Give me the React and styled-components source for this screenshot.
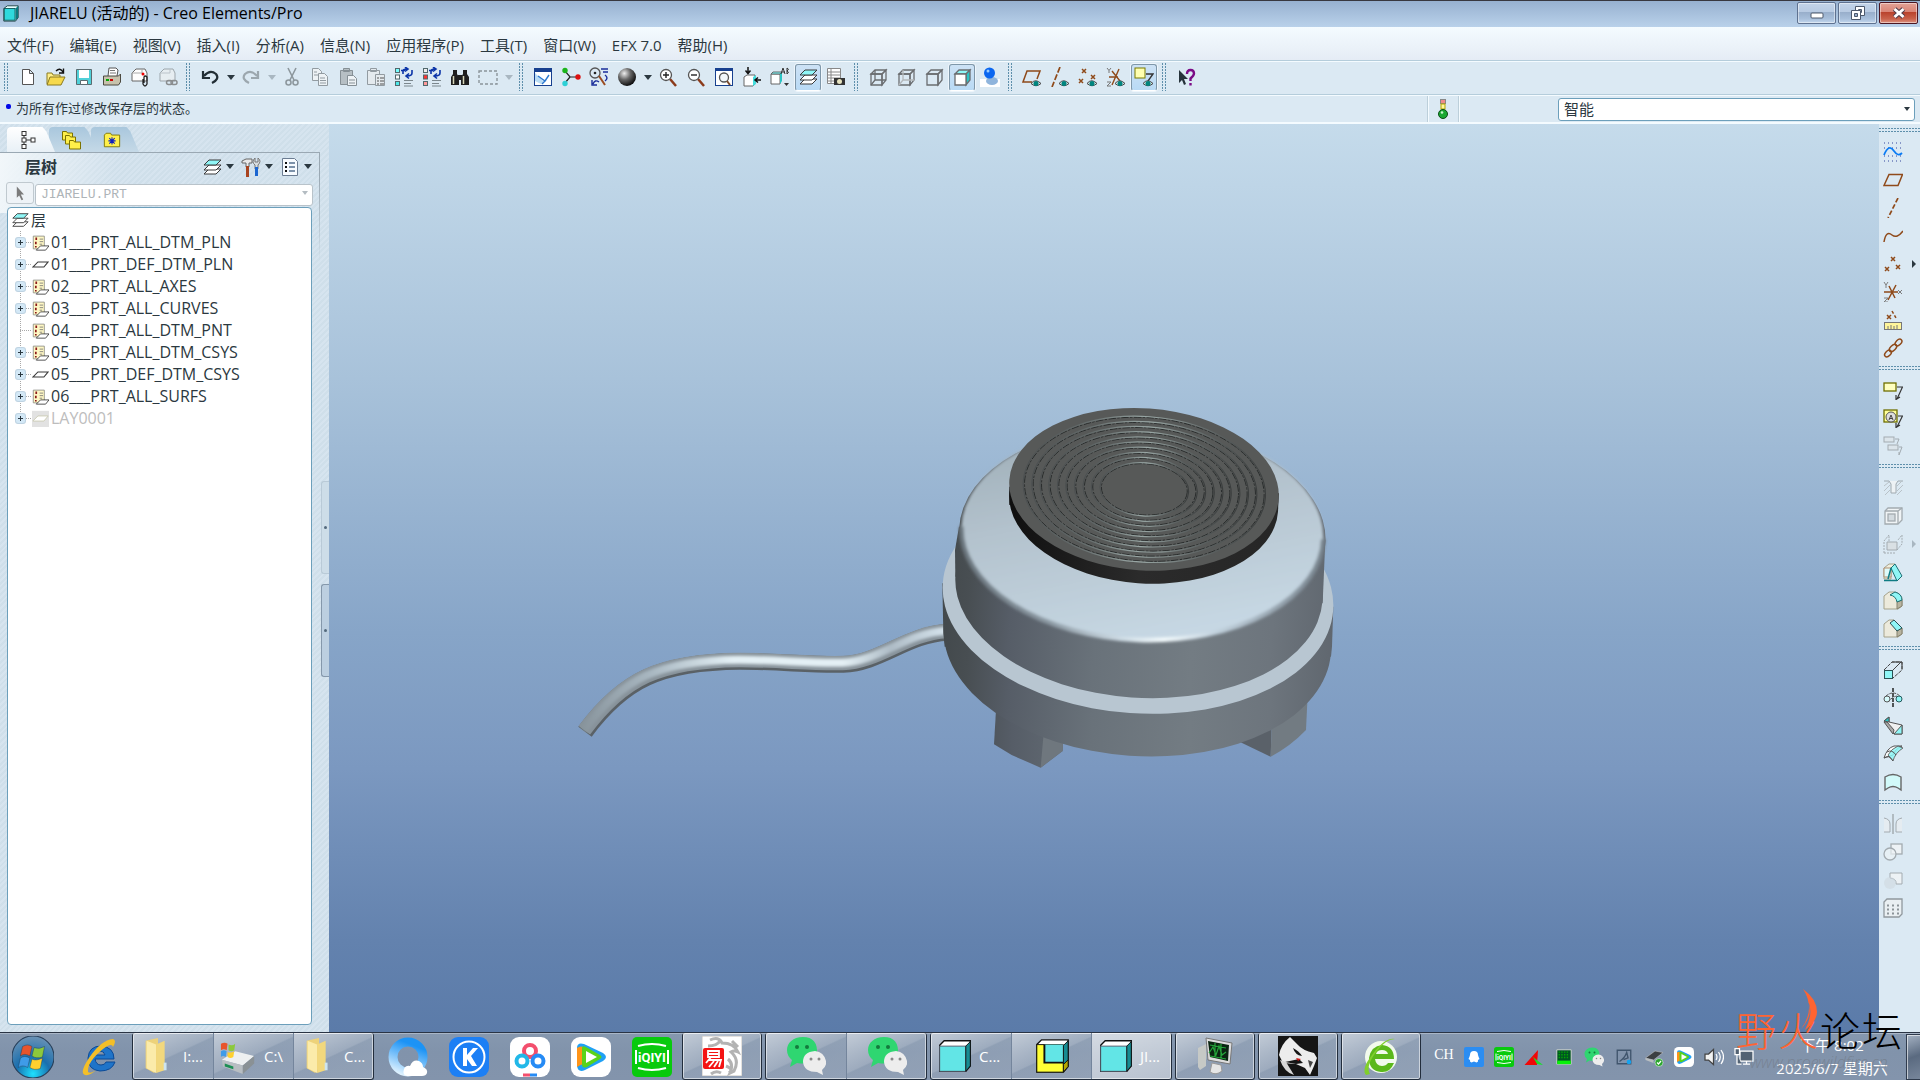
import React from "react";
import styled, { createGlobalStyle, css } from "styled-components";

const Global = createGlobalStyle`
  *, *::before, *::after { box-sizing: border-box; }
  body { margin: 0; background: #dbe9f3; }
  button, input, select { font: inherit; color: inherit; }
  button { background: none; border: 0; padding: 0; margin: 0; }
  ul { list-style: none; margin: 0; padding: 0; }
  svg { display: block; }
`;

const Desktop = styled.div`
  display: flex;
  flex-direction: column;
  height: 100vh;
  overflow: hidden;
  position: relative;
  color: #2b3840;
  font-family: "Open Sans", "Noto Sans CJK SC", sans-serif;
  font-size: 15px;
`;

/* ---------- title bar ---------- */
const TitleBar = styled.header`
  height: 27px;
  flex: none;
  display: flex;
  align-items: center;
  gap: 10px;
  padding: 0 2px 2px;
  border-top: 1px solid #38383f;
  background: linear-gradient(#97b1d0, #b9d1ea);
  color: #000;
`;
const Title = styled.h1`
  flex: 1;
  margin: 0;
  font-size: 16px;
  line-height: 22px;
  font-weight: 400;
`;
const WindowButtons = styled.div`
  display: flex;
  gap: 2px;
  height: 22px;
`;
const WindowButton = styled.button`
  width: 39px;
  height: 22px;
  display: grid;
  place-items: center;
  border-radius: 2px;
  border: 1px solid ${(p) => (p.$close ? "#4c1622" : "#5f7290")};
  box-shadow: inset 0 0 0 1px rgba(255, 255, 255, 0.45);
  background: ${(p) =>
    p.$close
      ? "linear-gradient(#e3a296, #d98475 45%, #b9422c 46%, #c9634c 80%, #dd9484)"
      : "linear-gradient(#c3d4e9, #b7cae2 45%, #98aecb 46%, #a9c0dc 80%, #c4d8ee)"};
`;

/* ---------- menus and toolbars ---------- */
const MenuBar = styled.nav`
  height: 34px;
  flex: none;
  display: flex;
  gap: 2px;
  background: linear-gradient(#f4fbff, #e5ecf5);
  border-bottom: 1px solid #b5cddb;
`;
const MenuItem = styled.button`
  padding: 2px 7px 0;
  line-height: 32px;
  font-size: 15px;
  white-space: nowrap;
`;
const ToolBar = styled.div`
  height: 34px;
  flex: none;
  display: flex;
  align-items: center;
  padding-bottom: 2px;
  border-top: 1px solid #f4fbff;
  border-bottom: 1px solid #b5cddb;
  background: #dbe9f3;
`;
const Grip = styled.span`
  flex: none;
  ${(p) =>
    p.$flat
      ? css`
          height: 4px;
          margin: 4px 0 6px;
          background: repeating-linear-gradient(90deg, #5e8fab 0 2px, transparent 2px 3px);
          mask: linear-gradient(#000 1px, transparent 1px 3px, #000 3px);
        `
      : css`
          width: 4px;
          height: 28px;
          margin: 0 6px 0 4px;
          background: repeating-linear-gradient(#5e8fab 0 2px, transparent 2px 3px);
          mask: linear-gradient(90deg, #000 1px, transparent 1px 3px, #000 3px);
        `}
`;
const ToolButton = styled.button`
  width: 28px;
  height: 28px;
  flex: none;
  display: grid;
  place-items: center;
  border-radius: 3px;
  ${(p) =>
    p.$pressed &&
    css`
      width: 26px;
      height: 27px;
      margin: 0 1px;
      background: linear-gradient(#cde2f5, #b9daf5);
      border: 1px solid #7f97a9;
      border-bottom-color: #fff;
      box-shadow: 0 0 0 1px #eef6fc;
    `}
`;
const DropButton = styled.button`
  width: 13px;
  height: 26px;
  flex: none;
  display: grid;
  place-items: center;
  color: ${(p) => (p.$off ? "#a9b7c1" : "#2b3840")};
`;

/* ---------- status row ---------- */
const StatusRow = styled.div`
  height: 29px;
  flex: none;
  display: flex;
  align-items: center;
  background: #dbe9f3;
  border-top: 1px solid #f4fbff;
  border-bottom: 2px solid #f4fbff;
`;
const StatusText = styled.p`
  flex: 1;
  margin: 0;
  padding: 0 0 2px 6px;
  display: flex;
  align-items: center;
  gap: 5px;
  font-size: 13px;
  line-height: 24px;
`;
const Bullet = styled.i`
  width: 5px;
  height: 5px;
  margin-bottom: 3px;
  border-radius: 2px;
  background: #0008e8;
`;
const LightCell = styled.div`
  width: 32px;
  height: 26px;
  display: grid;
  place-items: center;
  border: solid #bccfda;
  border-width: 0 1px;
  box-shadow: 1px 0 #f4fbff, inset 1px 0 #f4fbff;
`;
const FilterCell = styled.div`
  width: 461px;
  padding-right: 5px;
  display: flex;
  justify-content: flex-end;
`;
const FilterField = styled.div`
  width: 357px;
  position: relative;
`;
const SelectBox = styled.select`
  width: 100%;
  height: ${(p) => (p.$muted ? "22px" : "23px")};
  padding: 0 5px;
  appearance: none;
  border: 1px solid ${(p) => (p.$muted ? "#b9c3ca" : "#6c9fbb")};
  border-radius: 3px;
  background: #fff;
  opacity: 1;
  color: ${(p) => (p.$muted ? "#aeb4b8" : "#2b3840")};
  font-family: ${(p) =>
    p.$muted ? '"Liberation Mono", monospace' : '"Open Sans", "Noto Sans CJK SC", sans-serif'};
  font-size: ${(p) => (p.$muted ? "13px" : "15px")};
`;
const SelectArrow = styled.span`
  position: absolute;
  right: 5px;
  top: 50%;
  transform: translateY(-50%);
  pointer-events: none;
  color: ${(p) => (p.$off ? "#b4bcc2" : "#2b3840")};
`;

/* ---------- work area ---------- */
const WorkArea = styled.main`
  flex: 1;
  min-height: 0;
  display: flex;
`;
const SidePanel = styled.aside`
  width: 329px;
  flex: none;
  display: flex;
  background: repeating-linear-gradient(135deg, #cfdfea 0 2px, #d6e4ef 2px 4px);
`;
const PanelColumn = styled.div`
  width: 320px;
  display: flex;
  flex-direction: column;
`;
const TabStrip = styled.div`
  display: flex;
  height: 28px;
  padding: 3px 0 0 7px;
`;
const Tab = styled.button`
  width: 42px;
  height: 25px;
  display: flex;
  padding-left: 12px;
  align-items: center;
  position: relative;
  z-index: ${(p) => (p.$active ? 2 : 1)};
  &::before {
    content: "";
    position: absolute;
    inset: 0 -6px 0 0;
    z-index: -1;
    border-radius: 4px 0 0 0;
    background: ${(p) => (p.$active ? "linear-gradient(#fff, #e8f0f6)" : "linear-gradient(#a9c7dd, #c5d9e7)")};
    clip-path: polygon(0 0, 74% 0, 82% 18%, 100% 100%, 0 100%);
  }
`;
const PanelBody = styled.section`
  flex: 1;
  min-height: 0;
  display: flex;
  flex-direction: column;
  border-top: 1px solid #98a9b4;
  border-right: 1px solid #b5c3ce;
  border-image: linear-gradient(#9aa8b3, #9aa8b3 24px, transparent 110px) 1;
  background: linear-gradient(100deg, #f2f7fa, rgba(242, 247, 250, 0) 36%) 0 0 / 100% 60px no-repeat;
  padding: 0 6px 7px;
`;
const PanelHeader = styled.div`
  height: 29px;
  display: flex;
  align-items: center;
  padding: 0 1px 2px 19px;
`;
const PanelTitle = styled.h2`
  flex: 1;
  margin: 0;
  font-size: 16px;
  font-weight: 700;
  line-height: 24px;
`;
const PanelTool = styled.button`
  width: 39px;
  height: 24px;
  display: flex;
  align-items: center;
  justify-content: flex-end;
  gap: 4px;
`;
const PartRow = styled.div`
  display: flex;
  gap: 1px;
  height: 25px;
`;
const PickButton = styled.button`
  width: 28px;
  height: 22px;
  display: grid;
  place-items: center;
  border: 1px solid #c0c9cf;
  border-radius: 3px;
  background: #eef3f7;
`;
const PartField = styled.div`
  flex: 1;
  height: 22px;
  position: relative;
`;
const TreeBox = styled.div`
  flex: 1;
  width: 305px;
  margin-left: 1px;
  border: 1px solid #6c9fbb;
  border-radius: 4px;
  background: #fff;
  padding: 0 3px;
`;
const TreeRoot = styled.div`
  height: 23px;
  display: flex;
  align-items: center;
  gap: 2px;
`;
const TreeRow = styled.li`
  height: 22px;
  display: flex;
  align-items: center;
  padding-left: 1px;
  line-height: 20px;
  font-size: 16px;
  white-space: nowrap;
  color: ${(p) => (p.$off ? "#bdbdbd" : "#2b3840")};
`;
const Twig = styled.span`
  width: 20px;
  height: 22px;
  display: flex;
  align-items: center;
  padding-left: 4px;
  background:
    repeating-linear-gradient(#a9a9a9 0 1px, transparent 1px 2px) 8px 0 / 1px ${(p) => (p.$last ? "11px" : "22px")} no-repeat,
    repeating-linear-gradient(90deg, #a9a9a9 0 1px, transparent 1px 2px) 8px 11px / 12px 1px no-repeat;
`;
const Expander = styled.button`
  width: 9px;
  height: 9px;
  border-radius: 2px;
  box-shadow: 0 0 0 1px #bfd3e2;
  background:
    linear-gradient(#2b3840, #2b3840) center / 5px 1px no-repeat,
    linear-gradient(#2b3840, #2b3840) center / 1px 5px no-repeat,
    #d3e8f6;
`;
const RowIcon = styled.span`
  width: 19px;
  display: grid;
  place-items: start;
`;
const Splitter = styled.div`
  width: 9px;
  padding: 357px 0 0 1px;
  display: flex;
  flex-direction: column;
  gap: 10px;
`;
const SplitHandle = styled.button`
  width: 8px;
  height: 93px;
  display: grid;
  place-items: center;
  border: 1px solid ${(p) => (p.$strong ? "#8598ab" : "#b9cad7")};
  border-right: 0;
  border-radius: 3px 0 0 3px;
  background: ${(p) => (p.$strong ? "#bccfe0" : "#cddde8")};
  &::after {
    content: "";
    width: 3px;
    height: 3px;
    border-radius: 50%;
    background: #53697c;
  }
`;
const Canvas = styled.section`
  flex: 1;
  min-width: 0;
  background: linear-gradient(#c5dbeb, #a8c2da 28%, #87a5c8 56%, #7b98c0 71%, #6382ae 90%, #5b7ba9);
`;
const Scene = styled.svg`
  width: 100%;
  height: 100%;
`;
const SideTools = styled.aside`
  width: 41px;
  flex: none;
  display: flex;
  flex-direction: column;
  background: #dbe9f3;
`;
const SideToolRow = styled.div`
  display: flex;
  align-items: center;
  height: 28px;
`;

/* ---------- taskbar ---------- */
const TaskBar = styled.footer`
  height: 48px;
  flex: none;
  display: flex;
  color: #fff;
  border-top: 1px solid #2a3444;
  box-shadow: inset 0 1px #a9b6c7;
  background: linear-gradient(#8698af, #8193ab 40%, #8394ac);
`;
const LaunchButton = styled.button`
  width: ${(p) => (p.$wide ? "66px" : "61px")};
  display: grid;
  place-items: center;
`;
const TaskGroup = styled.div`
  display: flex;
  margin-right: 3px;
  border: 1px solid #222d3c;
  border-top: 0;
  border-radius: 3px;
  box-shadow: inset 0 0 0 1px rgba(255, 255, 255, 0.55);
`;
const TaskButton = styled.button`
  width: ${(p) => (p.$solo ? "78px" : "80px")};
  display: flex;
  align-items: center;
  gap: 6px;
  justify-content: ${(p) => (p.$label ? "flex-start" : "center")};
  padding-left: ${(p) => (p.$label ? "6px" : "0")};
  font-size: 15px;
  text-align: left;
  white-space: nowrap;
  background: ${(p) =>
    p.$active
      ? "linear-gradient(160deg, rgba(255,255,255,.65), rgba(255,255,255,.42))"
      : "linear-gradient(155deg, rgba(255,255,255,.5), rgba(255,255,255,.22) 48%, rgba(255,255,255,.1) 50%, rgba(255,255,255,.12))"};
  & + & {
    border-left: 1px solid #74859c;
  }
`;
const Tray = styled.div`
  flex: 1;
  display: flex;
  align-items: center;
  justify-content: flex-end;
`;
const InputLang = styled.button`
  width: 30px;
  padding-bottom: 3px;
  font-family: "Liberation Serif", serif;
  font-size: 14px;
`;
const TrayButton = styled.button`
  width: 30px;
  height: 46px;
  display: grid;
  place-items: center;
`;
const Clock = styled.time`
  width: 147px;
  padding-right: 1px;
  font-size: 15px;
  line-height: 23px;
  text-align: center;
`;
const ShowDesktop = styled.button`
  width: 14px;
  height: 46px;
  border: 1px solid #2f3b4d;
  border-right: 0;
  box-shadow: inset 1px 1px rgba(255, 255, 255, 0.6);
  background: linear-gradient(160deg, #a5b2c3, #5a6a80 50%, #77869b);
`;
const Watermark = styled.div`
  position: absolute;
  right: 18px;
  bottom: 7px;
  width: 166px;
  pointer-events: none;
  font-family: "Noto Sans CJK SC", sans-serif;
  font-weight: 300;
`;
const MarkLine = styled.div`
  display: flex;
  justify-content: space-between;
  font-size: 40px;
  line-height: 44px;
  color: #000;
`;
const Fire = styled.span`
  color: #ff6432;
`;
const Flame = styled.svg`
  position: absolute;
  left: 64px;
  top: -18px;
`;
const MarkUrl = styled.div`
  font-family: "Open Sans", sans-serif;
  font-style: italic;
  font-size: 16px;
  line-height: 22px;
  text-align: center;
  color: rgba(110, 115, 125, 0.55);
`;

/* ---------- drawings ---------- */
const K = "#3a3a3a";
const CY = "#8ff6f6";
const BR = "#8f4a1a";
const GY = "#a3abb1";
const X = ({ x, y, c = BR, r = 2 }) => (
  <path d={`M${x - r} ${y - r}l${2 * r} ${2 * r}M${x + r} ${y - r}l${-2 * r} ${2 * r}`} stroke={c} strokeWidth="1.5" />
);
const Eye = () => (
  <g>
    <path d="M9 16.500Q13.500 11 19 16.500Q14 21 9 16.500Z" fill="#d5e2e4" stroke="#444" />
    <circle cx="14" cy="16.500" r="2.500" fill="#00857f" />
  </g>
);
const Swap = () => (
  <path d="M9 7V4q0-2 4-2M11 0l3 2-3 2.500M18 3v3q0 3-5 3M15 6.500L12 9l3 2.500M7 3.500h4" fill="none" stroke="#0b34a8" strokeWidth="1.600" />
);
const Cubes = ({ a, b, c }) => (
  <g>
    {[a, b, c].map((f, i) => (
      <rect key={i} x="1.500" y={1.5 + i * 6.5} width="4" height="4" fill={f} stroke="#52686c" />
    ))}
    <path d="M10 13.500h9M10 16.500h7M10 19h9" stroke="#7b878d" />
    <Swap />
  </g>
);
const Box = ({ top = "none", front = "none", side = "none", hidden }) => (
  <g stroke="#6b6d70" fill="none" strokeWidth="1.300">
    <path d="M3 7l4-4h11l-4 4z" fill={top} />
    <path d="M14 7l4-4v10l-4 5z" fill={side} />
    <path d="M3 7h11v11H3z" fill={front} />
    {hidden && <path d="M7 3v10h11M7 13l-4 5" stroke={hidden} />}
  </g>
);
const Plane = ({ y, fill = "#fff", s = K }) => <path d={`M2 ${y + 5}l5-5h12l-5 5z`} fill={fill} stroke={s} />;
const Tag = ({ fill = "#ffffc0", s = "#6f6f00", a = "#333" }) => (
  <g fill="none">
    <rect x="1" y="3" width="12" height="8" fill={fill} stroke={s} strokeWidth="1.300" />
    <path d="M14 7h5.500L14 19M13 15v4.500l4-2.500" stroke={a} strokeWidth="1.200" />
  </g>
);

const icons = {
  app: <g><path d="M2 5l4-3h12v13l-3 4H2z" fill="#eaffff" stroke="#1a3b3c" /><rect x="2.500" y="5" width="12" height="13" fill="#2fd9dd" stroke="#0f5557" /><path d="M15 5l3-3v13l-3 3z" fill="#0c7a80" /></g>,
  fresh: <path d="M4.500 2.500h7l4 4v11h-11zM11.500 2.500v4h4" fill="#fff" stroke="#555" />,
  open: <g><path d="M1 6h5l1 2h7v9H1z" fill="#ffef8a" stroke="#8a7a20" /><path d="M4 10h15l-4 8H1z" fill="#f6d94c" stroke="#8a7a20" /><path d="M10 4q4-4 7 1M17.500 1.500V6H13" fill="none" stroke="#111" strokeWidth="1.400" /></g>,
  save: <g><path d="M2.500 2.500h15v15h-15z" fill="#4fd0d8" stroke="#5b6b70" /><rect x="5" y="3" width="10" height="8" fill="#fff" /><path d="M6.500 13.500h7v4h-7z" fill="#fff" stroke="#5b6b70" /></g>,
  print: <g><path d="M6 9l1-8h7l2 2-1 6" fill="#fff" stroke="#555" /><path d="M8 3.500h5M8 6h6" stroke="#777" /><path d="M1.500 9h15l2-2v8l-2 3h-15z" fill="#c7c2ac" stroke="#4c4a40" /><path d="M4 13h3" stroke="#0a0" strokeWidth="2" /><path d="M8 13h3" stroke="#c00" strokeWidth="2" /></g>,
  mail: <g><path d="M2 14V6l4-4h9l2 4v8z" fill="#fdfdfd" stroke="#666" /><path d="M2 6h10V2" fill="none" stroke="#aaa" /><circle cx="13" cy="7" r="1.500" fill="#e00" /><path d="M13 12v5q2 4 4 0v-7q-2-2-3 0v6" fill="none" stroke="#222" strokeWidth="1.300" /></g>,
  mailLink: <g opacity=".8"><path d="M2 14V6l4-4h9l2 4v8z" fill="#e9eef1" stroke="#8d959a" /><path d="M2 6h10V2" fill="none" stroke="#b4bbc0" /><rect x="8.500" y="13.500" width="6" height="4" rx="2" fill="none" stroke="#777" strokeWidth="1.500" /><rect x="13" y="13.500" width="6" height="4" rx="2" fill="none" stroke="#777" strokeWidth="1.500" /></g>,
  undo: <path d="M4 9q6-7 12-2 4 5-4 9M3 4v7h7" fill="none" stroke="#222e35" strokeWidth="2.200" />,
  redo: <path d="M16 9Q10 2 4 7q-4 5 4 9M17 4v7h-7" fill="none" stroke="#9ca7ae" strokeWidth="2.200" />,
  cut: <g fill="none" stroke="#8d979d" strokeWidth="1.600"><path d="M6 1l6 12M14 1L8 13" /><circle cx="6.500" cy="15.500" r="2.500" /><circle cx="13.500" cy="15.500" r="2.500" /></g>,
  copy: <g fill="#edf2f5" stroke="#929ba1"><path d="M2.500 1.500h6l3 3v9h-9z" /><path d="M8.500 6.500h6l3 3v9h-9zM10 11h5M10 13.500h6M10 16h6M4 5h3M4 8h4" /></g>,
  paste: <g fill="#b6bfc4" stroke="#858f95"><path d="M2.500 3.500h12v14h-12zM5.500 1.500h6v3h-6z" /><path d="M9.500 8.500h6l3 3v7h-9zM11 13h6M11 16h6" fill="#edf2f5" /></g>,
  pasteSp: <g fill="#e4eaee" stroke="#929ba1"><path d="M1.500 3.500h12v14h-12zM4.500 1.500h6v3h-6z" /><path d="M9.500 7.500h9v11h-9z" /><path d="M11 11h2M14 11h4M11 14h2M14 14h4M11 17h2M14 17h4" stroke="#555" /></g>,
  regen: <Cubes a="#7ff" b="#fff" c="#4de8e8" />,
  regenAll: <Cubes a="#eee" b="#f33" c="#f99" />,
  find: <g fill="#1e1e1e"><path d="M3 3h4v4l2 3v8H1v-8l2-3zM13 3h4v4l2 3v8h-8v-8l2-3z" /><path d="M8 8h4v5H8z" /><path d="M3.500 9v8M13.500 9v8" stroke="#d5d5b8" strokeWidth="1.500" /></g>,
  marquee: <rect x="1" y="4" width="18" height="13" fill="none" stroke="#8b949a" strokeWidth="1.400" strokeDasharray="3 2" />,
  repaint: <g><rect x="1.500" y="1.500" width="17" height="17" fill="#fff" stroke="#17408f" /><path d="M1 1h18v4H1z" fill="#17408f" /><path d="M2 6l9 9-3 2-6-3z" fill="#b9dcf5" /><path d="M5 9l7 5 4-6M9 17l4-4" stroke="#2a78d0" fill="none" strokeWidth="1.400" /></g>,
  orient: <g><path d="M4 4l5 6h8M9 10l-5 6" stroke="#222" fill="none" strokeWidth="1.200" /><circle cx="4" cy="3.500" r="2.700" fill="#1cb51c" /><circle cx="17" cy="10" r="2.700" fill="#d11" /><circle cx="4" cy="16.500" r="2.700" fill="#2ed0d6" /></g>,
  views: <g fill="none"><circle cx="6" cy="6" r="5" stroke="#555" strokeWidth="1.300" /><circle cx="6" cy="6" r="1.300" fill="#222" /><path d="M10 9l6 9" stroke="#9a4b20" strokeWidth="2" /><path d="M12 2h7M14 5h5M16 8q4 3 0 6M4 17q2-5 6-2M3 13v5h5" stroke="#1a2e9a" strokeWidth="1.400" /></g>,
  sphere: <circle cx="10" cy="10" r="9" fill="url(#ball)" />,
  zoomIn: <g><path d="M12 12l6 7" stroke="#8b3a1a" strokeWidth="2.500" /><circle cx="8" cy="8" r="5.500" fill="#fff" stroke="#555" strokeWidth="1.300" /><path d="M5 8h6M8 5v6" stroke="#222" strokeWidth="1.400" /></g>,
  zoomOut: <g><path d="M12 12l6 7" stroke="#8b3a1a" strokeWidth="2.500" /><circle cx="8" cy="8" r="5.500" fill="#fff" stroke="#555" strokeWidth="1.300" /><path d="M5 8h6" stroke="#222" strokeWidth="1.400" /></g>,
  refit: <g><rect x="1.500" y="1.500" width="17" height="17" fill="#fff" stroke="#17408f" /><path d="M1 1h18v3H1z" fill="#17408f" /><circle cx="10" cy="10.500" r="4.500" fill="#f2f7fa" stroke="#555" strokeWidth="1.300" /><path d="M13 14l3 4" stroke="#7a4a2a" strokeWidth="2" /></g>,
  reorient: <g><path d="M2 10l3-2h8v9l-2 2H2z" fill="#fff" stroke="#666" /><path d="M11 10l3-2v9l-3 2z" fill="#4dd" /><path d="M6 0v6M3.500 3.500L6 6.500l2.500-3M19 13h-6M16 10.500l-3 2.500 3 2.500" fill="none" stroke="#111" strokeWidth="1.500" /></g>,
  saved: <g><path d="M1 7h9v10H1z" fill="#fff" stroke="#666" /><path d="M3 5h9l-2 2H1z" fill="#7ff" stroke="#666" /><path d="M10 7l2-2v9l-2 3z" fill="#2cc4c4" /><path d="M11 7l2-6 2 6M12 5h3M17 1v6M17 1q3 1 0 3 3 1 0 3" fill="none" stroke="#333" /><path d="M14 16h5l-2.500 3z" fill="#333" /></g>,
  layers: <g><Plane y={12} /><Plane y={8} /><Plane y={3} fill={CY} /></g>,
  report: <g><path d="M1.500 1.500h13v15h-13zM1.500 5h13M1.500 8h13M1.500 11h13M1.500 14h13M5 1.500v15" fill="#fff" stroke="#888" /><rect x="8" y="11" width="11" height="7" fill="#333" /><circle cx="13.500" cy="14.500" r="2.500" fill="#e8e4c0" /></g>,
  wire: <Box hidden="#6b6d70" />,
  hidden: <Box hidden="#b4b8bb" />,
  noHidden: <Box />,
  shaded: <Box top={CY} front="#fff" side="#2cc4c4" />,
  realistic: <g><path d="M0 12h20v8H0z" fill="#fff" /><ellipse cx="12" cy="14" rx="6" ry="4" fill="#8fb4dc" /><circle cx="9.500" cy="6" r="5.500" fill="#0a66f0" /><circle cx="8" cy="4" r="1.500" fill="#9cf" /></g>,
  dtmPlane: <g><path d="M10 15H1l4-11h13l-3 8" fill="none" stroke={BR} strokeWidth="1.500" /><Eye /></g>,
  dtmAxis: <g><path d="M10 0L2 20" stroke={BR} strokeWidth="1.700" strokeDasharray="6 2" /><Eye /></g>,
  dtmPoint: <g><X x={6} y={4} /><X x={15} y={10} /><X x={3} y={14} /><Eye /></g>,
  dtmCsys: <g><path d="M3 10h9M13 2L6 18M6 4l8 10" stroke={BR} strokeWidth="1.400" /><path d="M1 1l2 2.500L5 1M3 3.500V6M1 15h4l-4 4h4" stroke="#777" fill="none" /><Eye /></g>,
  annot: <g><rect x="1" y="1" width="10" height="10" fill="#ffffb0" stroke="#7a7a00" /><path d="M12 7h7l-5 7" stroke="#333" fill="none" strokeWidth="1.300" /><Eye /></g>,
  help: <g><path d="M3 3v13l3-3 2 5 2-1-2-5h4z" fill="#26333b" /><path d="M11 7q0-4 3.500-4T18 6.500q0 2-3.500 5V14M14.500 16v2.500" fill="none" stroke="#7b0c86" strokeWidth="2.400" /></g>,
  light: <g><rect x="7.500" y=".5" width="5" height="4" fill="#f08a8a" stroke="#888" /><rect x="8" y="5" width="4" height="5" fill="#fff7a0" stroke="#b5a500" /><circle cx="10" cy="15" r="4.500" fill="#19a832" stroke="#0a4d16" /><circle cx="9" cy="13.500" r="1.300" fill="#c6f5ce" /></g>,
  treeTab: <g fill="#fff" stroke="#333"><path d="M5 4v12M5 10h9" /><rect x="3" y="1.500" width="4" height="4" /><rect x="3" y="8" width="4" height="4" /><rect x="3" y="14.500" width="4" height="4" /><rect x="12" y="8" width="4" height="4" /></g>,
  folders: <g fill="#fff04a" stroke="#7d7300"><path d="M1.500 1.500h4l1 1.500h5v7h-10z" /><path d="M4.500 5.500h4l1 1.500h5v7h-10z" /><path d="M8.500 10.500h4l1 1.500h6v7h-11z" /></g>,
  favs: <g><path d="M1.500 4.500l2-2h5l1 2h9v13h-17z" fill="#fff04a" stroke="#7d7300" /><path d="M10 7v8M6 11h8M7 8l6 6M13 8l-6 6" stroke="#1020c0" strokeWidth="1.200" /></g>,
  tools: <g><path d="M1 4l4-2h6v4H8v4H5V6H1z" fill="#e9e9e9" stroke="#666" /><path d="M5 9h3v11H5z" fill="#a8431f" /><path d="M14 1v4h3V1q4 3 0 7v4h-3V8q-4-3 0-7z" fill="#d8dde0" stroke="#777" /><path d="M14 10h3v9h-3z" fill="#1c66d0" /></g>,
  sheet: <g><path d="M2.500 1.500h12l3 3v14h-15z" fill="#f7fbff" stroke="#6b7c92" /><path d="M9 6h6M9 10h6M9 14h6" stroke="#55708f" strokeWidth="1.400" /><path d="M5 6h2M5 10h2M5 14h2" stroke="#111" strokeWidth="2" /></g>,
  pick: <path d="M6 2v14l3-3 3 6 2-1-3-6h4z" fill="#7b7b7b" />,
  ruleLayer: <g><path d="M1.500 2.500h13v15h-13z" fill="#fff8c4" stroke="#8c8c84" /><path d="M5 4v3M4.500 9v3M4.500 14v2" stroke="#8c1a1a" strokeWidth="2" /><path d="M9 6h4M9 9h4M9 12h3" stroke="#777" /><path d="M5 19l5-5h10l-4 5z" fill="#fff" stroke={K} /></g>,
  flatLayer: <path d="M1 13l6-6h12l-5 6z" fill="#fff" stroke={K} strokeWidth="1.300" />,
  offLayer: <g><path d="M0 1h20v19H0z" fill="#e2e2e2" /><path d="M1 13l6-6h12l-5 6z" fill="#fff" stroke="#c9c9b0" /></g>,
  sketch: <g fill="none"><path d="M1 1h19M1 6h19M1 14h19M1 19h19" stroke="#33449c" strokeDasharray="1 3" /><path d="M1 13Q6 1 11 9q4 6 8 2" stroke="#0a7cf5" strokeWidth="1.800" /></g>,
  plane: <path d="M1 15.500L6 4.500h13.500L15 15.500z" fill="none" stroke={BR} strokeWidth="1.500" />,
  axis: <path d="M15 0L5 20" stroke={BR} strokeWidth="1.700" strokeDasharray="5 2" />,
  curve: <path d="M1 16Q3 4 9 9q5 4 11-4" fill="none" stroke={BR} strokeWidth="1.500" />,
  points: <g><X x={10} y={5} /><X x={4} y={15} /><X x={15} y={13} /></g>,
  csys: <g><path d="M1 10h14M13 3L5 18M6 4l6 12" stroke={BR} strokeWidth="1.500" /><path d="M1 0l2 3 2-3M3 3v3M1 16h4l-4 4h4M15 8l4 4M19 8l-4 4" stroke="#7c7c7c" fill="none" /></g>,
  measure: <g><X x={6} y={7} /><path d="M9 1l4 7" stroke={BR} strokeWidth="1.500" strokeDasharray="3 2" /><rect x="1.500" y="12.500" width="17" height="7" fill="#fff59a" stroke="#777" /><path d="M5 19v-3M8 19v-4M11 19v-3M14 19v-4" stroke="#777" /></g>,
  chain: <g fill="none" stroke={BR} strokeWidth="1.500"><ellipse cx="5" cy="15.500" rx="4" ry="2.500" transform="rotate(-45 5 15.500)" /><ellipse cx="10" cy="10" rx="4.500" ry="2.500" transform="rotate(-45 10 10)" /><ellipse cx="15.500" cy="4.500" rx="4" ry="2.500" transform="rotate(-45 15.500 4.500)" /></g>,
  tag: <Tag />,
  tagA: <g><rect x="1" y="2" width="13" height="12" fill="#ffff9a" stroke="#6f6f00" strokeWidth="1.300" /><path d="M15 8h4.500L14 19M13 15v4.500l4-2.500" fill="none" stroke="#333" strokeWidth="1.200" /><circle cx="8" cy="9" r="5" fill="#dedede" stroke="#555" /><path d="M6 12L8 7l2 5M6.500 10.500h3" stroke="#444" fill="none" /></g>,
  tags: <g stroke={GY} fill="#dce5eb"><rect x="1" y="1" width="10" height="5" /><rect x="5" y="9" width="10" height="5" /><path d="M12 3h4l-2 5M16 11h3l-3 8v-3" fill="none" /></g>,
  hole: <g stroke="#b9c2c8" fill="none"><path d="M1 3h5l2 3v9h5V6l2-3h5" fill="#edf2f5" stroke="#a0aab0" /><path d="M1 8l5-4M1 13l6-6M2 17l5-5M14 8l5-5M14 13l6-6M14 17l5-5" /></g>,
  shell: <g stroke="#a3abb0" fill="#f0f4f6" strokeWidth="1.300"><path d="M2 5l3-3h14v12l-4 4H2z" /><path d="M2 5h13v13M15 5l4-3" fill="none" /><rect x="5" y="8" width="7" height="7" fill="#d3dbe0" /></g>,
  rib: <g stroke="#a3abb0" fill="#d9e0e4"><path d="M4 8h10v8H4z" /><path d="M1 19V7l5-6v7M14 16l5-6V1l-4 5M1 19h12" fill="none" strokeDasharray="2 1" /></g>,
  draft: <g><path d="M1 6l5-4h6L8 6v11H1z" fill="#efeede" stroke="#a5a28b" /><path d="M1 6h7v9H1z" fill="#dffafa" stroke="#b08f70" /><path d="M8 6l4-4 7 12-5 5z" fill={CY} stroke="#1d7075" /><path d="M1 18.500h13M8 6l-3 11" fill="none" stroke="#0f7c84" strokeWidth="1.500" /></g>,
  round: <g><path d="M1 6l5-4h6q7 2 7 8v6l-4 3H1z" fill="#eceadc" stroke="#a5a28b" /><path d="M14 12l5-2v6l-5 3z" fill="#b8b4a0" stroke="#85826e" /><path d="M7 5l5-3q7 2 7 8l-5 2q-1-6-7-7z" fill={CY} stroke="#1d7075" /></g>,
  chamfer: <g><path d="M1 6l5-4h5l8 8v6l-4 3H1z" fill="#eceadc" stroke="#a5a28b" /><path d="M14 13l5-3v6l-5 3z" fill="#b8b4a0" stroke="#85826e" /><path d="M7 5l4-3 8 8-5 3z" fill={CY} stroke="#2b5053" /></g>,
  extrude: <g fill="none" stroke="#444"><rect x="1.500" y="10.500" width="8" height="8" fill={CY} stroke="#2b5053" /><path d="M1 10l8-8h10v8l-9 8" strokeDasharray="4 1" /><path d="M9 2h10v7M10 10l8-8" /></g>,
  revolve: <g fill="none" stroke="#555"><path d="M10 0v20" stroke="#222" strokeWidth="1.500" strokeDasharray="4 1" /><circle cx="4" cy="11" r="3" fill="#d6fbfb" /><circle cx="16" cy="11" r="3" fill={CY} stroke="#25595c" /><path d="M3 8q7-6 14 0M5 14q5-6 10-6" strokeDasharray="3 1" /></g>,
  blend: <g stroke="#555"><path d="M1 5l5-4v5l13 3v9h-8z" fill="#f0f0f0" /><path d="M1 5l5-4v5z" fill="#2cc4c4" /><path d="M1 6l9 12 1-4-7-8z" fill="#a9a9a9" /><path d="M11 18h8V9z" fill={CY} /></g>,
  boundary: <g stroke="#555"><path d="M1 14q3-10 10-12h8q-7 3-9 9z" fill="#fff" /><path d="M10 17q2-8 10-13l-5-2q-7 3-10 9z" fill={CY} opacity=".85" /><path d="M1 14q5-4 9 3M4 8q5-3 9 3" fill="none" /></g>,
  style: <path d="M2 18V5q8-5 16 0v13l-3-2q-5-3-10 0z" fill="#d2fafa" stroke="#666" strokeWidth="1.400" />,
  mirror: <g fill="#e5ecf1" stroke="#a3abb0"><path d="M10 0v20" strokeWidth="1.500" /><path d="M1 4q6 1 6 6v8H1M19 4q-6 1-6 6v8h6" /></g>,
  merge: <g fill="#edf2f5" stroke="#a3abb0" strokeWidth="1.300"><rect x="8" y="2" width="11" height="10" /><circle cx="7" cy="12" r="6" fillOpacity=".7" /></g>,
  trim: <g><path d="M7 3h12v11h-6q1-5-6-6z" fill="#edf2f5" stroke="#a3abb0" /><circle cx="7" cy="13" r="6" fill="#cfd9df" opacity=".6" /></g>,
  pattern: <g><path d="M1 4l3-3h15v15l-3 3H1z" fill="#e9eff2" stroke="#90989d" strokeWidth="1.300" /><path d="M4 7.500h12M4 11.500h12M4 15.500h12" stroke="#8b9398" strokeWidth="2" strokeDasharray="2 3" /></g>,
};
const Icon = ({ name, size = 20 }) => (
  <svg width={size} height={size} viewBox="0 0 20 20" aria-hidden="true">
    {icons[name]}
  </svg>
);
const Down = () => (
  <svg width="8" height="5" viewBox="0 0 8 5" aria-hidden="true"><path d="M0 0h8L4 5z" fill="currentColor" /></svg>
);

/* taskbar pictures, drawn on a 40 x 40 grid */
const Creo = () => (
  <g>
    <path d="M3 8l5-5h29v28l-5 6H3z" fill="#fff" stroke="#111" strokeWidth="1.500" />
    <rect x="3" y="9" width="29" height="28" fill="#62e5e6" stroke="#556" />
    <path d="M32 9l5-5v27l-5 6z" fill="#178c92" stroke="#111" />
  </g>
);
const CreoAlt = () => (
  <g>
    <path d="M4 8l5-5h28v28l-5 6H4z" fill="#fff" stroke="#111" strokeWidth="1.500" />
    <path d="M4 8h28v29H4z" fill="#ffff35" stroke="#111" />
    <path d="M12 8h20v19H12z" fill="#62e5e6" />
    <path d="M12 8v19h20" fill="none" stroke="#111" strokeWidth="2" />
    <path d="M32 9l5-5v20l-5 5z" fill="#178c92" stroke="#111" />
    <path d="M32 29l5-5v7l-5 6z" fill="#b5a800" stroke="#111" />
  </g>
);
const Folder = () => (
  <g><path d="M7 4l13-3v31l-4 6-9-5z" fill="#edd27a" /><path d="M8 4l10 4v30l-10-5z" fill="#fbebaa" /><path d="M18 8l9-4v31l-9 3z" fill="#f2d87d" /><path d="M26 27h3v8h-3z" fill="#cde4f0" /></g>
);
const Bubbles = () => (
  <g><path d="M17 1C7 1 1 7 1 14q0 6 5 10l-2 7 7-4q17 3 20-9Q32 1 17 1z" fill="#2fd671" /><circle cx="11" cy="11" r="2" fill="#147a3d" /><circle cx="21" cy="11" r="2" fill="#147a3d" /><path d="M29 15q-12 1-12 11 1 10 14 10l6 3-1-5q5-4 4-9-2-9-11-10z" fill="#ededed" /><circle cx="25" cy="23" r="1.500" fill="#888" /><circle cx="33" cy="23" r="1.500" fill="#888" /></g>
);
const Qiyi = () => (
  <g><rect width="40" height="40" rx="5" fill="#08ca0d" /><path d="M6 9q14-4 28 0M6 31q14 4 28 0M4 13v14M36 13v14" fill="none" stroke="#fff" strokeWidth="2" /><text x="20" y="25" textAnchor="middle" fontFamily="Roboto" fontWeight="700" fontSize="13" fill="#fff">iQIYI</text></g>
);
const Video = () => (
  <g><rect width="40" height="40" rx="9" fill="#fff" /><path d="M6 11q0-6 7-4l19 9q6 4 0 8L14 33q-7 3-8-4z" fill="#20a0f5" /><path d="M6 11v19q4-3 8-3V11q-4-3-8 0z" fill="#ff9418" /><path d="M11 11q0-3 4-1l14 8q3 2 0 4l-13 8q-5 2-5-3z" fill="#58d31b" /><path d="M15 14l11 6-11 6z" fill="#fff" /></g>
);
const pics = {
  start: <g><circle cx="20" cy="20" r="20" fill="url(#orb)" stroke="#273f5a" /><g stroke="#22384d" strokeWidth=".4"><path d="M10 10q5-3 9 0l-2 9q-5-3-9 0z" fill="#e8542c" /><path d="M21 11q5 2 10-1l-2 10q-6 2-10-1z" fill="#8cc93c" /><path d="M8 21q4-3 9 0l-2 9q-5-3-9 0z" fill="#3f9be8" /><path d="M19 22q4 2 10-1l-2 10q-6 2-10-1z" fill="#ffd02e" /></g></g>,
  ie: <g><path d="M31 22H15q1 6 6 6 4 0 5-3h9q-3 9-15 9-12-1-12-13 1-12 13-12 13 1 13 13zM15 18h10q-1-4-5-4t-5 4z" transform="translate(1 0)" fill="#1f74c9" stroke="#0c4a96" /><path d="M6 38q-6-2 4-17Q22 3 34 2q4 1 0 8-1-5-10 2Q8 25 9 35q3 2 8-2-6 6-11 5z" fill="#f4bf28" /></g>,
  folder: <Folder />,
  drive: <g><path d="M2 24l14-9 20 5-12 10z" fill="#eef0f1" /><path d="M2 24l22 6v9L3 31z" fill="#b8bec2" /><path d="M24 30l12-10v8l-12 11z" fill="#8a9195" /><path d="M5 28l9 3v3l-9-3z" fill="#1d8f55" /><path d="M1 7q4-2 7 0l-1 7q-3-2-6 0z" fill="#e8542c" /><path d="M9 8q4 2 7-1l-1 7q-3 2-6 0z" fill="#8cc93c" /><path d="M1 15q3-2 6 0l-1 6q-3-2-5 0z" fill="#3f9be8" /><path d="M8 16q4 1 7-1l-1 6q-3 2-6 0z" fill="#ffd02e" /></g>,
  browser: <g><circle cx="20" cy="20" r="15" fill="none" stroke="url(#sky)" strokeWidth="9" /><path d="M19 39q-5-1-3-7 2-4 6-3 3-7 9-5 4 2 4 6 5 2 4 6-1 3-5 3z" fill="#fff" /></g>,
  kugou: <g><rect width="40" height="40" rx="9" fill="#1c7ff5" /><circle cx="20" cy="20" r="15.500" fill="none" stroke="#fff" strokeWidth="2" /><path d="M14 11h4v7l6-7h5l-7 8 6 10h-5l-5-7v7h-4z" fill="#fff" /></g>,
  netdisk: <g><rect width="40" height="40" rx="9" fill="#fff" /><circle cx="20" cy="14" r="6" fill="none" stroke="#f34f6d" strokeWidth="4" /><circle cx="12" cy="24" r="5.500" fill="none" stroke="#22b8e8" strokeWidth="4" /><circle cx="28" cy="24" r="5.500" fill="none" stroke="#268bf5" strokeWidth="4" /><path d="M13 38h7" stroke="#f34f6d" strokeWidth="3" /><path d="M20 38h7" stroke="#268bf5" strokeWidth="3" /></g>,
  video: <Video />,
  qiyi: <Qiyi />,
  yi: <g><path d="M0 0h40v40H0z" fill="#fff" stroke="#c7c2bb" /><path d="M8 4q9-4 12 3 12 0 16 9-4-2-7 0 9 8 3 19l-4 2q4-9-2-14M6 10q9 0 12-5M24 30q8 3 3 7M9 38q5-4 10-1M30 5l6 6" fill="none" stroke="#b3b3b3" strokeWidth="3" /><rect x="1" y="12" width="21" height="21" rx="2" fill="#f41414" /><path d="M6 15h11v6H6zM6 18h11M9 21l-5 6M7 24h12l-2 7M12 25l-5 6M16 25l-4 6" fill="none" stroke="#fff" strokeWidth="1.800" /></g>,
  chat: <Bubbles />,
  creo: <Creo />,
  creoAlt: <CreoAlt />,
  monitor: <g><path d="M3 12l8-4v22l-6 4-2-3z" fill="#c6c9c6" /><path d="M11 2l26 5-2 21-22-4z" fill="#ddd" stroke="#777" /><path d="M13 5l21 4-1 16-18-4z" fill="#0b2411" /><path d="M14 17l4-6 3 8 3-9 3 9 4-3M15 9l16 3M15 20l16 3M20 7v14M26 8v14" fill="none" stroke="#25a53a" strokeWidth="1.200" /><path d="M17 27l9 2 1 6q-6 5-12 1z" fill="#e5e5e5" stroke="#999" /></g>,
  mask: <g><path d="M0 0h40v40H0z" fill="#151515" /><path d="M12 1q-9 7-11 18l4 8 13 1 9 4 5 7 4-9 3-8-3-5q-12-3-16-8z" fill="#ececec" /><path d="M15 12q6 3 9 8-7-1-9-8zM7 26l14-3 4 4-7 1z" fill="#151515" /><path d="M18 22l5 1-3 2z" fill="#d01313" /><path d="M30 24l5 2-3 6z" fill="#444" /><path d="M2 24q4 12 14 15l-8-13z" fill="#d8d8d8" /></g>,
  speed: <g><circle cx="20" cy="21" r="16" fill="#f2faec" /><path d="M33 23H14q1 7 7 7 4 0 6-3h6q-4 10-13 9Q8 35 8 22 10 10 21 9q12 1 12 14zM15 18h12q-1-4-6-4t-6 4z" fill="#5bb81b" /><path d="M5 39q-5-6 6-20Q24 1 34 3q-9 0-18 12Q4 30 9 38z" fill="#80cf2b" /></g>,
  tim: <g><rect width="40" height="40" rx="4" fill="#2b8df2" /><path d="M20 8q8 0 8 8 1 4 3 8l-3 2q1 4-3 5l-5-2-5 2q-4-1-3-5l-3-2q2-4 3-8 0-8 8-8z" fill="#fff" /></g>,
  red: <g><path d="M1 36L28 6l-2 30z" fill="#f00808" /><path d="M18 20l20 16-12-2z" fill="#18e02c" /></g>,
  chip: <g><path d="M4 4h32v32H4z" fill="#052" stroke="#ddd" strokeWidth="2" /><path d="M5 28h30v8H5z" fill="#08f208" /><path d="M8 9h24M8 15h24M8 21h24" stroke="#0a0" strokeWidth="3" strokeDasharray="3 3" /></g>,
  pen: <g fill="none" stroke="#40556d" strokeWidth="3"><path d="M5 5h30v30H5z" /><path d="M10 30q12-8 16-20l3 12-10 4" /><circle cx="31" cy="31" r="5" fill="#13a3f0" stroke="none" /></g>,
  usb: <g><path d="M3 22L22 8l16 3-19 15z" fill="#3b3f43" stroke="#ccc" /><path d="M3 22l16 4v6L3 26z" fill="#b9bec1" /><circle cx="30" cy="31" r="8" fill="#2ba52f" stroke="#fff" /><path d="M26 31l3 3 5-6" fill="none" stroke="#fff" strokeWidth="2.500" /></g>,
  sound: <g fill="none" stroke="#fff" strokeWidth="2.500"><path d="M2 14h7l10-9v30l-10-9H2z" fill="#f2f2f2" stroke="#444" /><path d="M24 14q4 6 0 12M29 10q7 10 0 20M34 6q10 14 0 28" /></g>,
  net: <g fill="#526273" stroke="#fff" strokeWidth="2.500"><path d="M12 8h26v20H12z" /><path d="M2 3h9v12H2zM6 15v19h9M18 34h14M25 28v6" /></g>,
};
const Pic = ({ name, size = 40 }) => (
  <svg width={size} height={size} viewBox="0 0 40 40" aria-hidden="true">{pics[name]}</svg>
);

const rings = [133, 159, 184, 210, 236, 261, 287, 313, 338, 364];
const cable = "M75 395C190 240 300 186 540 184C660 184 760 196 850 193C960 190 1040 104 1162 97";
const Model = () => (
  <Scene viewBox="329 124 1550 908" role="img" aria-label="JIARELU">
    <defs>
      <linearGradient id="wall" gradientUnits="userSpaceOnUse" x1="65" y1="0" x2="1240" y2="0">
        <stop offset="0" stopColor="#43494c" /><stop offset=".07" stopColor="#484e52" /><stop offset=".18" stopColor="#565d67" />
        <stop offset=".4" stopColor="#69727a" /><stop offset=".65" stopColor="#737c83" /><stop offset=".85" stopColor="#6d757d" /><stop offset="1" stopColor="#60676f" />
      </linearGradient>
      <linearGradient id="dome" x1=".1" y1="0" x2=".5" y2="1">
        <stop offset="0" stopColor="#9cacb5" /><stop offset=".45" stopColor="#b3c2cd" /><stop offset="1" stopColor="#c6d7e3" />
      </linearGradient>
      <linearGradient id="lip" gradientUnits="userSpaceOnUse" x1="110" y1="0" x2="1220" y2="0">
        <stop offset="0" stopColor="#69747c" /><stop offset=".25" stopColor="#8b98a2" /><stop offset=".45" stopColor="#cfdde6" /><stop offset=".56" stopColor="#f4fbfd" />
        <stop offset=".7" stopColor="#c2d2de" /><stop offset="1" stopColor="#74808a" />
      </linearGradient>
      <linearGradient id="rim" gradientUnits="userSpaceOnUse" x1="268" y1="0" x2="1077" y2="0">
        <stop offset="0" stopColor="#0f0f0f" /><stop offset=".5" stopColor="#2b2b2b" /><stop offset="1" stopColor="#262626" />
      </linearGradient>
      <linearGradient id="groove" x1="0" y1="0" x2="1" y2="0">
        <stop offset="0" stopColor="#4b4f50" /><stop offset=".25" stopColor="#666e6e" /><stop offset=".5" stopColor="#9aa8a6" /><stop offset=".75" stopColor="#626969" /><stop offset="1" stopColor="#3a3d3d" />
      </linearGradient>
      <linearGradient id="wire" gradientUnits="userSpaceOnUse" x1="60" y1="0" x2="1160" y2="0">
        <stop offset="0" stopColor="#87939b" /><stop offset=".2" stopColor="#a9b8c2" /><stop offset=".42" stopColor="#e4f0f5" /><stop offset=".72" stopColor="#e4f0f5" /><stop offset=".85" stopColor="#aebcc6" /><stop offset="1" stopColor="#d5e3ec" />
      </linearGradient>
      <radialGradient id="ball" cx=".35" cy=".3" r=".7"><stop offset="0" stopColor="#eee" /><stop offset=".5" stopColor="#666" /><stop offset="1" stopColor="#111" /></radialGradient>
      <radialGradient id="orb" cx=".5" cy=".9" r=".9"><stop offset="0" stopColor="#1ee0ff" /><stop offset=".45" stopColor="#1a6fae" /><stop offset="1" stopColor="#6d93b5" /></radialGradient>
      <linearGradient id="sky" x1="0" y1="1" x2=".4" y2="0"><stop offset="0" stopColor="#e3f4ff" /><stop offset="1" stopColor="#1c93f5" /></linearGradient>
      <filter id="soft" x="-5%" y="-5%" width="110%" height="110%"><feGaussianBlur stdDeviation="5" /></filter>
    </defs>
    <g transform="translate(560 600) scale(.33333)" fill="none">
      <path d={cable} stroke="#5a6166" strokeWidth="50" />
      <path d={cable} stroke="#87929a" strokeWidth="43" transform="translate(-2 -4)" />
      <g filter="url(#soft)"><path d={cable} stroke="url(#wire)" strokeWidth="24" transform="translate(-3 -5)" /></g>
    </g>
    <g transform="translate(920 390) scale(.33333)">
      <path d="M228 960L222 1063L275 1095L362 1133L428 1083L430 1040z" fill="url(#wall)" />
      <path d="M370 1040L362 1133L428 1083L430 1040z" fill="#6f777e" />
      <path d="M960 1056L1055 1010L1052 1100z" fill="#5a6169" />
      <path d="M1055 1000L1052 1100Q1110 1070 1158 1020L1163 915z" fill="#727b82" />
      <path d="M67 580L70 730L74 770L1233 800L1236 770L1240 650z" fill="url(#wall)" />
      <ellipse cx="652" cy="749" rx="582" ry="349" transform="rotate(4 652 749)" fill="url(#wall)" />
      <ellipse cx="654" cy="620" rx="587" ry="350" transform="rotate(4 654 620)" fill="#b8c6d1" />
      <ellipse cx="657" cy="594" rx="552" ry="329" transform="rotate(4 657 594)" fill="url(#wall)" />
      <path d="M117 410L105 480L106 560L1208 640L1216 450z" fill="url(#wall)" />
      <ellipse cx="667" cy="436" rx="550" ry="328" transform="rotate(2 667 436)" fill="url(#wall)" />
      <g filter="url(#soft)">
        <ellipse cx="667" cy="428" rx="543" ry="322" transform="rotate(2 667 428)" fill="url(#dome)" />
        <path d="M124 409A543 322 2 0 0 1210 447" fill="none" stroke="url(#lip)" strokeWidth="14" />
      </g>
      <path d="M268 290V345L1074 360L1077 310z" fill="url(#rim)" />
      <ellipse cx="671" cy="337" rx="404" ry="243" transform="rotate(4 671 337)" fill="url(#rim)" />
      <ellipse cx="672" cy="298" rx="405" ry="243" transform="rotate(4 672 298)" fill="#575958" />
      <g transform="rotate(4 673 298)" fill="none">
        {rings.map((r) => (
          <g key={r}>
            <ellipse cx="673" cy="298" rx={r - 4} ry={r * 0.6 - 3} stroke="#222525" strokeWidth="2.500" strokeDasharray="22 4 7 5" />
            <ellipse cx="673" cy="298" rx={r} ry={r * 0.6} stroke="url(#groove)" strokeWidth="3.500" />
          </g>
        ))}
      </g>
    </g>
  </Scene>
);

/* ---------- data ---------- */
const menus = ["文件(F)", "编辑(E)", "视图(V)", "插入(I)", "分析(A)", "信息(N)", "应用程序(P)", "工具(T)", "窗口(W)", "EFX 7.0", "帮助(H)"];
const topTools = [
  "|", "fresh", "open", "save", "print", "mail", "mailLink",
  "|", "undo", "v", "redo", "-v", "cut", "copy", "paste", "pasteSp", "regen", "regenAll", "find", "marquee", "-v",
  "|", "repaint", "orient", "views", "sphere", "v", "zoomIn", "zoomOut", "refit", "reorient", "saved", "*layers", "report",
  "|", "wire", "hidden", "noHidden", "*shaded", "realistic",
  "|", "dtmPlane", "dtmAxis", "dtmPoint", "dtmCsys", "*annot",
  "|", "help",
];
const sideTools = [
  "|", "sketch", "plane", "axis", "curve", "points>", "csys", "measure", "chain",
  "|", "tag", "tagA", "tags",
  "|", "hole", "shell", "rib>", "draft", "round", "chamfer",
  "|", "extrude", "revolve", "blend", "boundary", "style",
  "|", "mirror", "merge", "trim", "pattern",
];
const layers = [
  ["01___PRT_ALL_DTM_PLN", "ruleLayer"],
  ["01___PRT_DEF_DTM_PLN", "flatLayer"],
  ["02___PRT_ALL_AXES", "ruleLayer"],
  ["03___PRT_ALL_CURVES", "ruleLayer"],
  ["04___PRT_ALL_DTM_PNT", "ruleLayer", true],
  ["05___PRT_ALL_DTM_CSYS", "ruleLayer"],
  ["05___PRT_DEF_DTM_CSYS", "flatLayer"],
  ["06___PRT_ALL_SURFS", "ruleLayer"],
  ["LAY0001", "offLayer"],
];
const taskGroups = [
  [["yi"]],
  [["chat"], ["chat"]],
  [["creo", "C..."], ["creoAlt"], ["creo", "JI...", true]],
  [["monitor"]],
  [["mask"]],
  [["speed"]],
];
const picSize = { creo: 36, creoAlt: 38, folder: 38, drive: 38 };
const Tasks = ({ items }) => (
  <TaskGroup>
    {items.map(([pic, label, active], i) => (
      <TaskButton key={i} $label={label} $active={active} $solo={items.length === 1} aria-label={label || pic}>
        <Pic name={pic} size={picSize[pic] || 40} />
        {label}
      </TaskButton>
    ))}
  </TaskGroup>
);

export default function App() {
  return (
    <Desktop>
      <Global />
      <TitleBar>
        <Icon name="app" size={18} />
        <Title>JIARELU (活动的) - Creo Elements/Pro</Title>
        <WindowButtons>
          <WindowButton aria-label="minimize">
            <svg width="14" height="14"><rect x="1" y="7" width="12" height="5" rx="1" fill="#fff" stroke="#4d586b" /></svg>
          </WindowButton>
          <WindowButton aria-label="restore">
            <svg width="16" height="16" fill="#fff" stroke="#4d586b"><path d="M5.500 1.500h9v9h-9z" /><path d="M8.500 4.500h3v3h-3z" /><path d="M1.500 5.500h9v9h-9z" /><path d="M4.500 8.500h3v3h-3z" fill="#98aecb" /></svg>
          </WindowButton>
          <WindowButton $close aria-label="close">
            <svg width="16" height="14"><path d="M3.500 3l9 8M12.500 3l-9 8" stroke="#4d3a48" strokeWidth="5" /><path d="M3.500 3l9 8M12.500 3l-9 8" stroke="#fff" strokeWidth="3" /></svg>
          </WindowButton>
        </WindowButtons>
      </TitleBar>

      <MenuBar>{menus.map((m) => <MenuItem key={m}>{m}</MenuItem>)}</MenuBar>

      <ToolBar role="toolbar">
        {topTools.map((t, i) => {
          if (t === "|") return <Grip key={i} />;
          if (t.endsWith("v")) return <DropButton key={i} $off={t[0] === "-"} aria-label="more"><Down /></DropButton>;
          const name = t.replace("*", "");
          return <ToolButton key={i} $pressed={t[0] === "*"} aria-label={name}><Icon name={name} /></ToolButton>;
        })}
      </ToolBar>

      <StatusRow>
        <StatusText><Bullet />为所有作过修改保存层的状态。</StatusText>
        <LightCell><Icon name="light" /></LightCell>
        <FilterCell>
          <FilterField>
            <SelectBox aria-label="filter" defaultValue="智能"><option>智能</option></SelectBox>
            <SelectArrow><svg width="6" height="4"><path d="M0 0h6L3 4z" fill="currentColor" /></svg></SelectArrow>
          </FilterField>
        </FilterCell>
      </StatusRow>

      <WorkArea>
        <SidePanel>
          <PanelColumn>
            <TabStrip>
              <Tab $active aria-label="model tree"><Icon name="treeTab" /></Tab>
              <Tab aria-label="folders"><Icon name="folders" /></Tab>
              <Tab aria-label="favorites"><Icon name="favs" size={18} /></Tab>
            </TabStrip>
            <PanelBody>
              <PanelHeader>
                <PanelTitle>层树</PanelTitle>
                <PanelTool aria-label="layers"><Icon name="layers" /><Down /></PanelTool>
                <PanelTool aria-label="settings"><Icon name="tools" /><Down /></PanelTool>
                <PanelTool aria-label="display"><Icon name="sheet" /><Down /></PanelTool>
              </PanelHeader>
              <PartRow>
                <PickButton aria-label="pick"><Icon name="pick" size={16} /></PickButton>
                <PartField>
                  <SelectBox $muted disabled aria-label="part" defaultValue="JIARELU.PRT"><option>JIARELU.PRT</option></SelectBox>
                  <SelectArrow $off><svg width="6" height="4"><path d="M0 0h6L3 4z" fill="currentColor" /></svg></SelectArrow>
                </PartField>
              </PartRow>
              <TreeBox>
                <TreeRoot><Icon name="layers" size={18} />层</TreeRoot>
                <ul>
                  {layers.map(([name, icon, leaf], i) => (
                    <TreeRow key={name} $off={icon === "offLayer"}>
                      <Twig $last={i === layers.length - 1}>{!leaf && <Expander aria-label={`expand ${name}`} />}</Twig>
                      <RowIcon><Icon name={icon} size={17} /></RowIcon>
                      {name}
                    </TreeRow>
                  ))}
                </ul>
              </TreeBox>
            </PanelBody>
          </PanelColumn>
          <Splitter>
            <SplitHandle aria-label="collapse" />
            <SplitHandle $strong aria-label="resize" />
          </Splitter>
        </SidePanel>
        <Canvas><Model /></Canvas>
        <SideTools>
          {sideTools.map((t, i) => {
            if (t === "|") return <Grip key={i} $flat />;
            const name = t.replace(">", "");
            return (
              <SideToolRow key={i}>
                <ToolButton aria-label={name}><Icon name={name} /></ToolButton>
                {t.endsWith(">") && (
                  <DropButton $off={name === "rib"} aria-label="more">
                    <svg width="4" height="8"><path d="M0 0v8l4-4z" fill="currentColor" /></svg>
                  </DropButton>
                )}
              </SideToolRow>
            );
          })}
        </SideTools>
      </WorkArea>

      <TaskBar>
        <LaunchButton $wide aria-label="start"><Pic name="start" size={42} /></LaunchButton>
        <LaunchButton $wide aria-label="internet"><Pic name="ie" /></LaunchButton>
        <Tasks items={[["folder", "I:..."], ["drive", "C:\\"], ["folder", "C..."]]} />
        {["browser", "kugou", "netdisk", "video", "qiyi"].map((p) => (
          <LaunchButton key={p} aria-label={p}><Pic name={p} /></LaunchButton>
        ))}
        {taskGroups.map((g, i) => <Tasks key={i} items={g} />)}
        <Tray>
          <InputLang>CH</InputLang>
          {["tim", "qiyi", "red", "chip", "chat", "pen", "usb", "video", "sound", "net"].map((p) => (
            <TrayButton key={p} aria-label={p}><Pic name={p} size={p === "pen" || p === "chip" ? 18 : 20} /></TrayButton>
          ))}
          <Clock>下午 8:02<br />2025/6/7 星期六</Clock>
          <ShowDesktop aria-label="desktop" />
        </Tray>
      </TaskBar>

      <Watermark>
        <MarkLine><Fire>野</Fire><Fire>火</Fire><span>论</span><span>坛</span></MarkLine>
        <MarkUrl>www.proewildfire.cn</MarkUrl>
        <Flame width="18" height="42" viewBox="0 0 18 42"><path d="M3 0q14 10 14 23 0 9-12 18Q14 24 8 12q3 10 1 15-3 8-8 13Q16 20 3 0z" fill="#ff6432" /></Flame>
      </Watermark>
    </Desktop>
  );
}
